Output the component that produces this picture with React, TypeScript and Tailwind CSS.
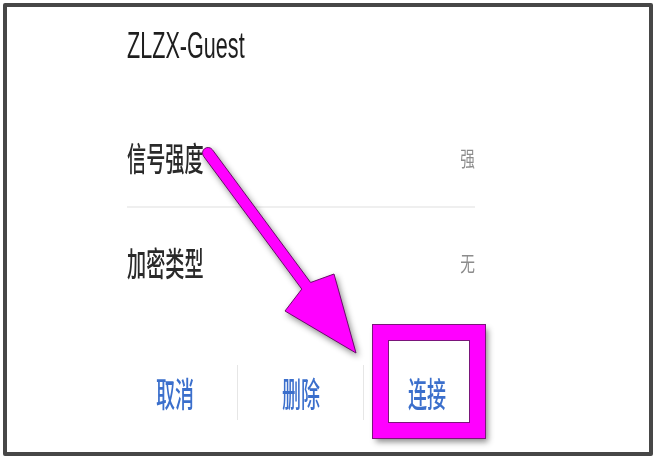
const cjk = "font-['Noto_Sans_CJK_SC','Noto_Sans',sans-serif]";

const InfoRow = ({ label, value }: { label: string; value: string }) => (
  <div className="flex h-[40px] items-center justify-between">
    <span className={`${cjk} inline-block origin-left scale-x-[0.58] text-[33px] font-medium leading-[40px] text-[#2a2a2a]`}>
      {label}
    </span>
    <span className={`${cjk} inline-block origin-right scale-x-[0.7] text-[21px] leading-[40px] text-[#8c8c8c]`}>
      {value}
    </span>
  </div>
);

const ActionButton = ({ label }: { label: string }) => (
  <button className="flex h-full w-[125px] items-center justify-center">
    <span className={`${cjk} inline-block scale-x-[0.56] text-[34px] font-medium leading-[40px] text-[#3b6fcc]`}>
      {label}
    </span>
  </button>
);

const Arrow = () => (
  <svg
    className="pointer-events-none absolute -left-[7px] -top-[7px] drop-shadow-[2px_3px_3px_rgba(0,0,0,0.45)]"
    width="656"
    height="459"
    viewBox="0 0 656 459"
  >
    <path
      d="M 212.4 149.7 L 310.6 282.5 L 334 274 L 356 353 L 285 311 L 301.8 289.1 L 203.6 156.3 A 5.5 5.5 0 0 1 212.4 149.7 Z"
      fill="#ff00ff"
      stroke="#6b0a6b"
      strokeWidth="1"
      strokeLinejoin="round"
    />
  </svg>
);

export default function App() {
  return (
    <div className="h-[459px] w-[656px] bg-white p-[3px]">
      <div className="relative h-full rounded-[2px] border-4 border-[#474747] bg-white">
        <div className="flex h-[80px] items-start pl-[120px] pt-[19px]">
          <h1 className="inline-block h-[40px] origin-left scale-x-[0.6] font-['Liberation_Sans',sans-serif] text-[36px] leading-[40px] text-[#1e1e1e]">
            ZLZX-Guest
          </h1>
        </div>

        <div className="ml-[120px] w-[348px]">
          <div className="pb-[29px] pt-[50px]">
            <InfoRow label="信号强度" value="强" />
          </div>
          <div className="h-[2px] bg-[#efefef]" />
          <div className="pt-[34px]">
            <InfoRow label="加密类型" value="无" />
          </div>
        </div>

        <div className="ml-[105px] mt-[83px] flex h-[55px] items-stretch">
          <ActionButton label="取消" />
          <div className="w-px bg-[#e6e6e6]" />
          <ActionButton label="删除" />
          <div className="w-px bg-[#e6e6e6]" />
          <ActionButton label="连接" />
        </div>

        <Arrow />

        <div className="pointer-events-none absolute left-[366px] top-[318px] h-[113px] w-[112px] border-[15px] border-[#ff00ff] shadow-[0_0_0_1px_#7a157a,inset_0_0_0_1px_#7a157a,3px_4px_6px_rgba(0,0,0,0.45)]" />
      </div>
    </div>
  );
}
